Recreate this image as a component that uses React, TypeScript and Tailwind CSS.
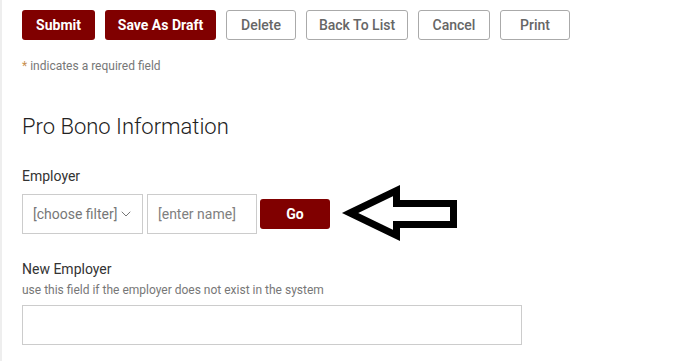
import { ChevronDown } from 'lucide-react'

const solidBtn =
	'h-[30px] rounded-[3px] bg-[#800000] text-[14px] font-bold text-white'
const outlineBtn =
	'h-[30px] rounded-[3px] border border-[#aaaaaa] bg-white text-[14px] font-medium text-[#666666]'

export default function App() {
	return (
		<div
			className="min-h-[361px] border-l-2 border-[#eeeeee] bg-white pl-5 pt-[10px]"
			style={{ fontFamily: 'Roboto, "Liberation Sans", sans-serif' }}
		>
			<div className="flex gap-[10px]">
				<button type="button" className={`${solidBtn} w-[73px]`}>
					Submit
				</button>
				<button type="button" className={`${solidBtn} w-[111px]`}>
					Save As Draft
				</button>
				<button type="button" className={`${outlineBtn} w-[70px]`}>
					Delete
				</button>
				<button type="button" className={`${outlineBtn} w-[102px]`}>
					Back To List
				</button>
				<button type="button" className={`${outlineBtn} w-[72px]`}>
					Cancel
				</button>
				<button type="button" className={`${outlineBtn} w-[70px]`}>
					Print
				</button>
			</div>

			<p className="mt-[18px] text-[12px] leading-[16px] text-[#777777]">
				<span className="text-[#c89050]">*</span> indicates a required field
			</p>

			<h2 className="mt-[39px] text-[22px] font-light leading-[28px] text-[#222222]">
				Pro Bono Information
			</h2>

			<div className="mt-[26px]">
				<label className="block text-[14px] leading-[18px] text-[#333333]">Employer</label>
				<div className="mt-[9px] flex items-center gap-1">
					<div className="flex h-[40px] w-[121px] items-center justify-between border border-[#cccccc] pl-[10px] pr-[8px] text-[14px] text-[#777777]">
						<span>[choose filter]</span>
						<ChevronDown size={16} strokeWidth={1.5} className="text-[#777777]" />
					</div>
					<input
						className="h-[40px] w-[110px] border border-[#cccccc] px-[10px] text-[14px] outline-none placeholder:text-[#808080]"
						placeholder="[enter name]"
					/>
					<button type="button" className={`${solidBtn} ml-[-1px] w-[70px]`}>
						Go
					</button>
					<svg width="122" height="66" viewBox="0 0 122 66" className="my-[-13px] ml-[5px]">
						<polygon
							points="11,32 57.5,9.5 57.5,22.5 114.5,22.5 114.5,43.5 57.5,43.5 57.5,54.5"
							fill="white"
							stroke="black"
							strokeWidth="7"
						/>
					</svg>
				</div>
			</div>

			<div className="mt-[26px]">
				<label className="block text-[14px] leading-[18px] text-[#333333]">New Employer</label>
				<p className="mt-[4px] text-[12px] leading-[16px] text-[#777777]">
					use this field if the employer does not exist in the system
				</p>
				<input className="mt-[7px] h-[40px] w-[500px] border border-[#cccccc] px-[10px] text-[14px] outline-none" />
			</div>
		</div>
	)
}
